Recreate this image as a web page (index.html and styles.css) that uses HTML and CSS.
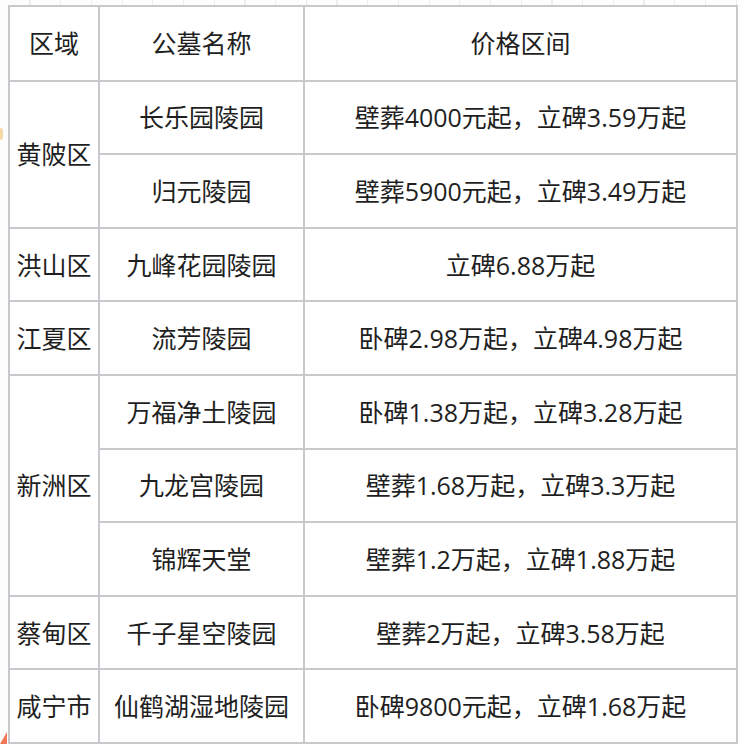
FILE: index.html
```html
<!DOCTYPE html>
<html lang="zh">
<head>
<meta charset="utf-8">
<link rel="stylesheet" href="styles.css">
</head>
<body>
<table class="price-table">
  <colgroup>
    <col class="c-area">
    <col class="c-name">
    <col class="c-price">
  </colgroup>
  <tr class="head"><td>区域</td><td>公墓名称</td><td>价格区间</td></tr>
  <tr><td rowspan="2">黄陂区</td><td>长乐园陵园</td><td>壁葬4000元起，立碑3.59万起</td></tr>
  <tr><td>归元陵园</td><td>壁葬5900元起，立碑3.49万起</td></tr>
  <tr><td>洪山区</td><td>九峰花园陵园</td><td>立碑6.88万起</td></tr>
  <tr><td>江夏区</td><td>流芳陵园</td><td>卧碑2.98万起，立碑4.98万起</td></tr>
  <tr><td rowspan="3">新洲区</td><td>万福净土陵园</td><td>卧碑1.38万起，立碑3.28万起</td></tr>
  <tr><td>九龙宫陵园</td><td>壁葬1.68万起，立碑3.3万起</td></tr>
  <tr><td>锦辉天堂</td><td>壁葬1.2万起，立碑1.88万起</td></tr>
  <tr><td>蔡甸区</td><td>千子星空陵园</td><td>壁葬2万起，立碑3.58万起</td></tr>
  <tr><td>咸宁市</td><td>仙鹤湖湿地陵园</td><td>卧碑9800元起，立碑1.68万起</td></tr>
</table>
<span class="mark mark-top"></span>
<span class="mark mark-bottom"></span>
</body>
</html>
```
FILE: styles.css
```css
html, body {
  margin: 0;
  padding: 0;
}
body {
  position: relative;
  width: 740px;
  height: 744px;
  overflow: hidden;
  background-color: #fdfdfd;
  background-image: repeating-linear-gradient(90deg, transparent 0, transparent 29.5px, #ececec 29.5px, #ececec 30.7px);
  padding: 5px 0 0 8px;
  box-sizing: border-box;
  font-family: "Open Sans", "Noto Sans CJK SC", sans-serif;
  color: #1f1f1f;
}
.price-table {
  border-collapse: collapse;
  table-layout: fixed;
  width: 728px;
  background: #fff;
  font-size: 25px;
}
.c-area { width: 90px; }
.c-name { width: 205px; }
.c-price { width: 433px; }
.price-table td {
  border: 2px solid #c9c9cd;
  text-align: center;
  vertical-align: middle;
  padding: 0;
  height: 71.6px;
  white-space: nowrap;
  line-height: 1.2;
}
.price-table .head td {
  height: 72.6px;
}
.mark {
  position: absolute;
  display: block;
}
.mark-top {
  left: 0;
  top: 128px;
  width: 3px;
  height: 12px;
  background: #f6d9a6;
  border-radius: 0 3px 3px 0;
}
.mark-bottom {
  left: 0;
  bottom: 0;
  width: 0;
  height: 0;
  border-left: 7px solid transparent;
  border-bottom: 12px solid #f2765a;
}
```
